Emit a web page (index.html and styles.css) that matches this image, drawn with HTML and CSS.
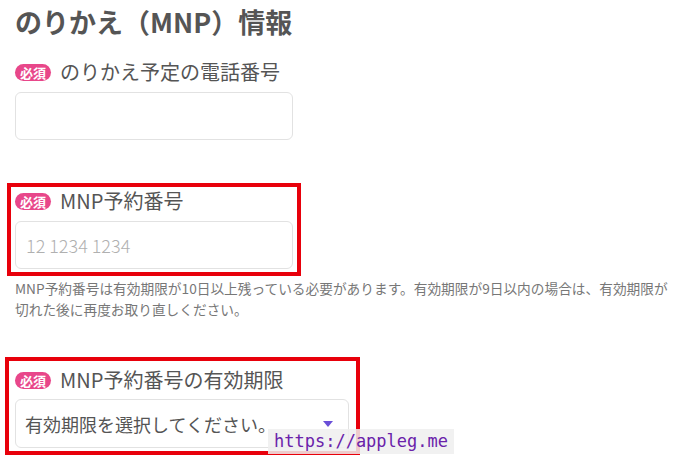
FILE: index.html
```html
<!DOCTYPE html>
<html lang="ja">
  <head>
    <meta charset="UTF-8" />
    <meta name="viewport" content="width=device-width, initial-scale=1.0" />
    <title>のりかえ（MNP）情報</title>
    <link rel="stylesheet" href="styles.css">
  </head>
  <body>
    <main class="mnp-form">
      <h2 class="section-title">のりかえ（MNP）情報</h2>

      <div class="field field-first">
        <label class="field-label" for="mnpTel">
          <span class="badge">必須</span>のりかえ予定の電話番号
        </label>
        <input type="tel" id="mnpTel" name="mnpTel" class="text-input" />
      </div>

      <div class="field marked marked-number">
        <label class="field-label" for="mnpNumber">
          <span class="badge">必須</span>MNP予約番号
        </label>
        <input
          type="text"
          id="mnpNumber"
          name="mnpNumber"
          class="text-input"
          placeholder="12 1234 1234"
        />
      </div>
      <p class="help-text">
        MNP予約番号は有効期限が10日以上残っている必要があります。有効期限が9日以内の場合は、有効期限が切れた後に再度お取り直しください。
      </p>

      <div class="field marked marked-expiry">
        <label class="field-label" for="mnpExpiry">
          <span class="badge">必須</span>MNP予約番号の有効期限
        </label>
        <div class="select-wrap">
          <select id="mnpExpiry" name="mnpExpiry" class="select-input">
            <option>有効期限を選択してください。</option>
          </select>
          <span class="select-arrow"></span>
        </div>
      </div>
    </main>

    <div class="watermark">https://appleg.me</div>
  </body>
</html>
```

FILE: styles.css
```css
/* MNP form */

body {
  font-family: "Noto Sans CJK JP", "Noto Sans", sans-serif;
  margin: 0;
  padding: 0;
  background-color: #fff;
  color: #555;
}

.mnp-form {
  padding: 4px 15px 0;
}

.section-title {
  font-size: 27px;
  font-weight: bold;
  line-height: 36px;
  margin: 0;
  color: #555;
}

.field {
  display: flex;
  flex-direction: column;
  gap: 6px;
}

.field-first {
  margin-top: 18px;
}

.field-label {
  display: flex;
  align-items: center;
  gap: 9px;
  font-size: 20px;
  line-height: 28px;
  color: #555;
}

.badge {
  display: inline-block;
  background-color: #e8478a;
  color: #fff;
  font-size: 13px;
  font-weight: bold;
  line-height: 17px;
  padding: 0 5px;
  border-radius: 9px;
}

.text-input {
  box-sizing: border-box;
  width: 278px;
  height: 48px;
  padding: 0 10px;
  border: 1px solid #e2e2e2;
  border-radius: 6px;
  font-family: inherit;
  font-size: 18px;
  color: #555;
  background-color: #fff;
}

.text-input::placeholder {
  color: #b0b0b0;
  font-weight: 300;
}

/* red annotation boxes */
.marked {
  width: fit-content;
  border: 4px solid #e8000b;
  margin-left: -8px;
  padding: 0 4px 3px;
}

.marked-number {
  margin-top: 43px;
}

.marked-expiry {
  margin-top: 37px;
  margin-left: -10px;
  padding: 5px 7px 3px 6px;
  gap: 5px;
}

.help-text {
  max-width: 660px;
  margin: 2px 0 0;
  font-size: 13.7px;
  line-height: 21px;
  color: #777;
}

.select-wrap {
  position: relative;
  width: 334px;
}

.select-input {
  box-sizing: border-box;
  width: 100%;
  height: 49px;
  padding: 0 36px 0 9px;
  border: 1px solid #e2e2e2;
  border-radius: 6px;
  font-family: inherit;
  font-size: 18px;
  color: #555;
  background-color: #fff;
  appearance: none;
  -webkit-appearance: none;
}

.select-arrow {
  position: absolute;
  right: 16px;
  top: 22px;
  width: 0;
  height: 0;
  border-left: 5px solid transparent;
  border-right: 5px solid transparent;
  border-top: 6px solid #6a4fd8;
}

.watermark {
  position: absolute;
  left: 268px;
  top: 429px;
  padding: 0 6px;
  height: 25px;
  line-height: 25px;
  background-color: rgba(238, 238, 238, 0.85);
  font-family: "DejaVu Sans Mono", monospace;
  font-size: 17px;
  color: #6a22aa;
}
```
